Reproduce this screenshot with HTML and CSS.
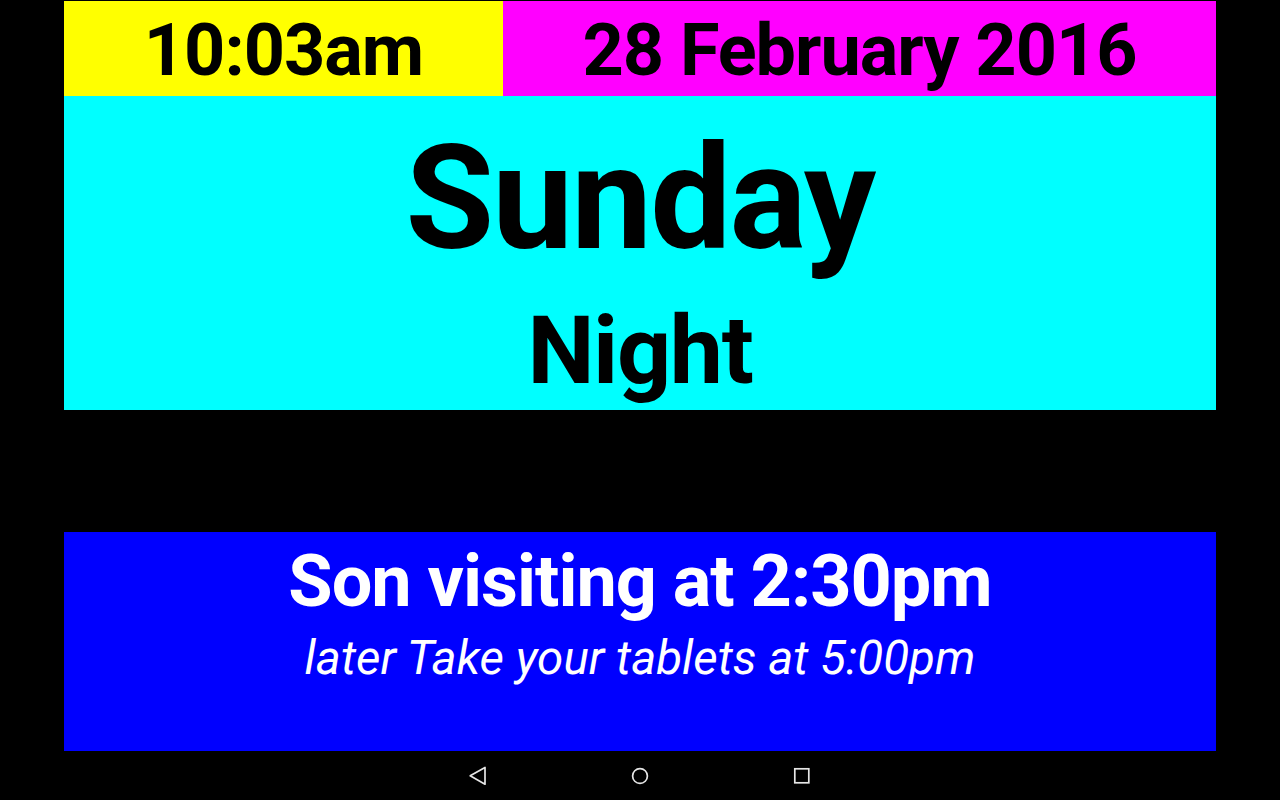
FILE: index.html
```html
<!DOCTYPE html>
<html lang="en">
<head>
<meta charset="utf-8">
<title>Clock</title>
<link rel="stylesheet" href="styles.css">
</head>
<body>
<div class="screen">
  <div class="top">
    <div class="time">10:03am</div>
    <div class="date">28 February 2016</div>
  </div>
  <div class="day">
    <div class="dayname">Sunday</div>
    <div class="period">Night</div>
  </div>
  <div class="spacer"></div>
  <div class="events">
    <div class="event">Son visiting at 2:30pm</div>
    <div class="later">later Take your tablets at 5:00pm</div>
  </div>
</div>
<nav class="navbar">
  <svg class="navicon" viewBox="0 0 24 24" width="24" height="24"><polygon points="4.2,11.8 19,3.4 19,20.2" fill="none" stroke="#e6e6e6" stroke-width="1.7" stroke-linejoin="round"/></svg>
  <svg class="navicon" viewBox="0 0 24 24" width="24" height="24"><circle cx="12" cy="12" r="7.4" fill="none" stroke="#e6e6e6" stroke-width="1.7"/></svg>
  <svg class="navicon" viewBox="0 0 24 24" width="24" height="24"><rect x="4.8" y="4.8" width="14" height="14" fill="none" stroke="#e6e6e6" stroke-width="1.7"/></svg>
</nav>
</body>
</html>
```

FILE: styles.css
```css
html, body {
  margin: 0;
  padding: 0;
  background: #000;
  height: 800px;
  overflow: hidden;
}
body {
  font-family: Roboto, "Liberation Sans", sans-serif;
  padding-top: 1px;
  box-sizing: border-box;
}
.screen {
  width: 1152px;
  margin: 0 auto;
  height: 750px;
  display: flex;
  flex-direction: column;
}
.top {
  display: flex;
  height: 95px;
}
.time, .date {
  font-weight: 700;
  font-size: 72px;
  letter-spacing: -0.014em;
  line-height: 90px;
  padding-top: 5px;
  text-align: center;
  color: #000;
  box-sizing: border-box;
  height: 95px;
}
.time {
  width: 439px;
  background: #ffff00;
}
.date {
  flex: 1;
  background: #ff00ff;
}
.day {
  height: 314px;
  background: #00ffff;
  text-align: center;
  color: #000;
  font-weight: 700;
}
.dayname {
  font-size: 144px;
  letter-spacing: -0.012em;
  line-height: 205px;
}
.period {
  font-size: 95px;
  letter-spacing: -0.014em;
  line-height: 100px;
}
.spacer {
  height: 122px;
}
.events {
  height: 219px;
  background: #0000ff;
  color: #fff;
  text-align: center;
}
.event {
  font-weight: 700;
  font-size: 72px;
  letter-spacing: -0.014em;
  line-height: 99px;
}
.later {
  font-style: italic;
  font-weight: 400;
  font-size: 47.5px;
  line-height: 55px;
}
.navbar {
  height: 49px;
  display: flex;
  justify-content: center;
  align-items: center;
  gap: 138px;
}
.navicon {
  display: block;
}
```
